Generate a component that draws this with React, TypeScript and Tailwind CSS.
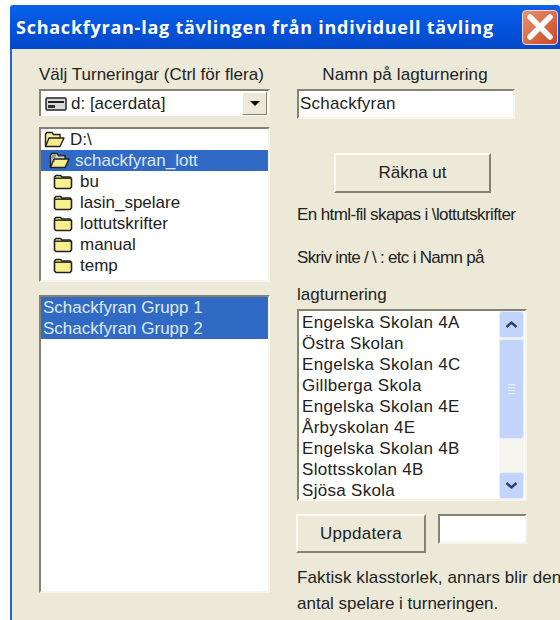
import React from "react";

const font = "font-['Liberation_Sans',Arial,sans-serif]";

function Folder({ open = false, shaded = false }: { open?: boolean; shaded?: boolean }) {
  if (open) {
    return (
      <svg width="21" height="17" viewBox="0 0 21 17" className="shrink-0">
        <path d="M1.5 15V3L3 1.5h5L9.5 3.5H16V7" fill={shaded ? "#d8d8d0" : "#f7ec9a"} stroke="#222" strokeWidth="1.4" />
        <path d="M1.5 15.5L5 7h15l-4 8.5z" fill="#f6ee8c" stroke="#222" strokeWidth="1.4" strokeLinejoin="round" />
        {shaded && <path d="M3 4h4M3 6h3M4 9h2M9 4h5" stroke="#555" strokeWidth="1" />}
      </svg>
    );
  }
  return (
    <svg width="20" height="16" viewBox="0 0 20 16" className="shrink-0">
      <path d="M1.5 3L3 1.5h4.5L9 3h8l1.5 1.5V13L17 14.5H3L1.5 13z" fill="#f8f08c" stroke="#222" strokeWidth="1.6" strokeLinejoin="round" />
      <path d="M2 4.2h16" stroke="#222" strokeWidth="1.4" />
    </svg>
  );
}

function DriveIcon() {
  return (
    <svg width="22" height="14" viewBox="0 0 22 14" className="shrink-0">
      <rect x="1" y="1" width="20" height="12" rx="1" fill="#d8d8d8" stroke="#222" strokeWidth="1.5" />
      <rect x="3" y="4" width="16" height="2" fill="#222" />
      <rect x="3" y="8" width="7" height="3" fill="#333" />
    </svg>
  );
}

function Sunken({ className = "", children }: { className?: string; children?: React.ReactNode }) {
  return (
    <div className={`bg-white border-2 border-t-[#85826f] border-l-[#85826f] border-r-[#f7f5ea] border-b-[#f7f5ea] ${className}`}>
      {children}
    </div>
  );
}

function RaisedButton({ label, className = "" }: { label: string; className?: string }) {
  return (
    <button className={`flex items-center justify-center bg-[#ece9d8] text-[17px] text-[#222] border-2 border-t-[#fbfaf3] border-l-[#fbfaf3] border-r-[#85826f] border-b-[#85826f] ${className}`}>
      {label}
    </button>
  );
}

function ScrollArrow({ up }: { up?: boolean }) {
  return (
    <div className="h-[27px] rounded-[3px] bg-[#c3d4fa] border border-[#e4ecfd] flex items-center justify-center">
      <svg width="13" height="9" viewBox="0 0 13 9">
        <path d={up ? "M1.5 7L6.5 2.5L11.5 7" : "M1.5 2L6.5 6.5L11.5 2"} fill="none" stroke="#2a3f78" strokeWidth="2.4" />
      </svg>
    </div>
  );
}

const folders = ["bu", "lasin_spelare", "lottutskrifter", "manual", "temp"];
const teams = [
  "Engelska Skolan 4A",
  "Östra Skolan",
  "Engelska Skolan 4C",
  "Gillberga Skola",
  "Engelska Skolan 4E",
  "Årbyskolan 4E",
  "Engelska Skolan 4B",
  "Slottsskolan 4B",
  "Sjösa Skola",
];

export default function App() {
  return (
    <div className={`w-[560px] h-[620px] overflow-hidden bg-white pl-[10px] pt-[5px] ${font}`}>
      <div className="w-[550px] h-[615px] flex flex-col">
        {/* title bar */}
        <div className="h-[44px] shrink-0 flex items-center pl-[6px] pr-[2px] rounded-t-[3px] bg-gradient-to-b from-[#0a62e8] via-[#0453dc] to-[#0349c9]">
          <span className="font-['Open_Sans',Verdana,sans-serif] font-bold text-[18px] tracking-[0.75px] text-white whitespace-nowrap">
            Schackfyran-lag tävlingen från individuell tävling
          </span>
          <div className="ml-auto w-[36px] h-[35px] rounded-[4px] border border-[#f0d8cc] bg-gradient-to-br from-[#e89270] to-[#c9431f] flex items-center justify-center">
            <svg width="28" height="28" viewBox="0 0 28 28">
              <path d="M4 4L24 24M24 4L4 24" stroke="#fff" strokeWidth="5.5" strokeLinecap="round" />
            </svg>
          </div>
        </div>

        {/* dialog body */}
        <div className="flex-1 flex border-l-2 border-[#2c62d8] bg-[#ece9d8] text-[#222] text-[17px]">
          <div className="w-[231px] ml-[27px] shrink-0 flex flex-col">
            <div className="h-[40px] pt-[16px] leading-5 whitespace-nowrap">Välj Turneringar (Ctrl för flera)</div>
            <Sunken className="h-[27px] flex items-center pl-[4px] pr-[1px] border-b-0">
              <DriveIcon />
              <span className="ml-[4px]">d: [acerdata]</span>
              <div className="ml-auto w-[25px] h-[23px] bg-[#ece9d8] border border-b-[#85826f] border-r-[#85826f] border-t-white border-l-white flex items-center justify-center">
                <div className="w-0 h-0 border-x-[5px] border-x-transparent border-t-[5px] border-t-black" />
              </div>
            </Sunken>
            <Sunken className="h-[155px] mt-[11px]">
              <div className="h-[21px] flex items-center pl-[3px] gap-[5px] leading-none">
                <Folder open />
                <span>D:\</span>
              </div>
              <div className="h-[21px] flex items-center pl-[8px] gap-[5px] bg-[#316ac5] text-[#dfe8f8]">
                <Folder open shaded />
                <span>schackfyran_lott</span>
              </div>
              {folders.map((name) => (
                <div key={name} className="h-[21px] flex items-center pl-[12px] gap-[7px]">
                  <Folder />
                  <span>{name}</span>
                </div>
              ))}
            </Sunken>
            <Sunken className="h-[298px] mt-[13px]">
              <div className="bg-[#316ac5] text-[#dfe8f8] pl-[2px] leading-[21px]">
                <div>Schackfyran Grupp 1</div>
                <div>Schackfyran Grupp 2</div>
              </div>
            </Sunken>
          </div>

          <div className="w-[231px] ml-[27px] shrink-0 flex flex-col">
            <div className="h-[40px] pt-[16px] leading-5 text-center pr-[15px] tracking-[0.1px] whitespace-nowrap">Namn på lagturnering</div>
            <Sunken className="w-[218px] h-[30px] flex items-center pl-[1px] tracking-[0.2px]">Schackfyran</Sunken>
            <RaisedButton label="Räkna ut" className="w-[157px] h-[40px] mt-[34px] ml-[37px]" />
            <div className="mt-[12px] leading-5 tracking-[-0.6px] whitespace-nowrap">En html-fil skapas i \lottutskrifter</div>
            <div className="mt-[23px] leading-5 tracking-[-0.7px] whitespace-nowrap">Skriv inte / \ : etc i Namn på</div>
            <div className="mt-[17px] leading-5 whitespace-nowrap">lagturnering</div>
            <Sunken className="w-[230px] h-[192px] mt-[4px] flex">
              <div className="flex-1 pl-[3px] leading-[21px] pt-[1px] tracking-[0.3px] whitespace-nowrap">
                {teams.map((t) => (
                  <div key={t}>{t}</div>
                ))}
              </div>
              <div className="w-[25px] mr-[1px] flex flex-col bg-[#f6f5ee]">
                <ScrollArrow up />
                <div className="h-[100px] mt-[1px] rounded-[3px] bg-[#c3d4fa] border border-[#e4ecfd] flex flex-col items-center justify-center gap-[2px]">
                  <div className="w-[7px] h-px bg-[#e8eefc]" />
                  <div className="w-[7px] h-px bg-[#e8eefc]" />
                  <div className="w-[7px] h-px bg-[#e8eefc]" />
                  <div className="w-[7px] h-px bg-[#e8eefc]" />
                </div>
                <div className="flex-1" />
                <ScrollArrow />
              </div>
            </Sunken>
            <div className="flex mt-[13px]">
              <RaisedButton label="Uppdatera" className="w-[130px] h-[39px] -ml-px tracking-[0.3px]" />
              <Sunken className="w-[89px] h-[30px] ml-[12px]" />
            </div>
            <div className="mt-[15px] leading-5 tracking-[0.1px] whitespace-nowrap">Faktisk klasstorlek, annars blir den</div>
            <div className="mt-[6px] leading-5 whitespace-nowrap">antal spelare i turneringen.</div>
          </div>
        </div>
      </div>
    </div>
  );
}
